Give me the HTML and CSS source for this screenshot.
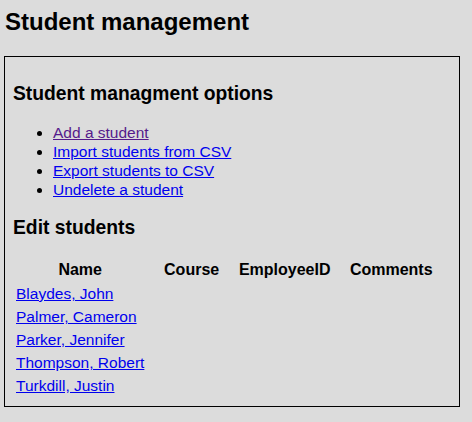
FILE: index.html
```html
<!DOCTYPE html>
<html>
<head>
<meta charset="utf-8">
<link rel="stylesheet" href="styles.css">
</head>
<body>
<h1 class="title">Student management</h1>
<div class="panel">
  <h2 class="section">Student managment options</h2>
  <ul class="options">
    <li><a class="visited" href="#">Add a student</a></li>
    <li><a href="#">Import students from CSV</a></li>
    <li><a href="#">Export students to CSV</a></li>
    <li><a href="#">Undelete a student</a></li>
  </ul>
  <h2 class="section">Edit students</h2>
  <table class="students">
    <thead>
      <tr><th class="col-name">Name</th><th class="col-course">Course</th><th class="col-emp">EmployeeID</th><th class="col-comments">Comments</th></tr>
    </thead>
    <tbody>
      <tr><td><a href="#">Blaydes, John</a></td><td></td><td></td><td></td></tr>
      <tr><td><a href="#">Palmer, Cameron</a></td><td></td><td></td><td></td></tr>
      <tr><td><a href="#">Parker, Jennifer</a></td><td></td><td></td><td></td></tr>
      <tr><td><a href="#">Thompson, Robert</a></td><td></td><td></td><td></td></tr>
      <tr><td><a href="#">Turkdill, Justin</a></td><td></td><td></td><td></td></tr>
    </tbody>
  </table>
</div>
</body>
</html>
```
FILE: styles.css
```css
html { background: #dcdcdc; }
body {
  margin: 0 4px;
  font-family: "Liberation Sans", Arial, sans-serif;
  font-size: 15.5px;
  color: #000;
  background: #dcdcdc;
}
a { color: #0000ee; }
a.visited { color: #551a8b; }
.title {
  font-size: 24px;
  font-weight: bold;
  margin: 0;
  padding: 8px 0 0 1px;
  line-height: 28px;
}
.panel {
  width: 438px;
  margin-top: 20px;
  border: 1px solid #000;
  padding: 8px 8px 8px 8px;
}
.section {
  font-size: 19.3px;
  font-weight: bold;
  margin: 18px 0;
  line-height: 22px;
}
.options {
  margin: 0;
  padding-left: 40px;
  line-height: 19px;
}
.students {
  width: 100%;
  border-spacing: 2px;
  margin-top: 11px;
}
.students th {
  font-size: 16px;
  padding: 1px 1px 2px;
  line-height: 19px;
  text-align: center;
  white-space: nowrap;
}
.students td {
  padding: 1px;
  line-height: 19px;
  white-space: nowrap;
}
.col-name { width: 127px; }
.col-course { width: 87px; }
.col-emp { width: 91px; }
.col-comments { width: 114px; }
```
